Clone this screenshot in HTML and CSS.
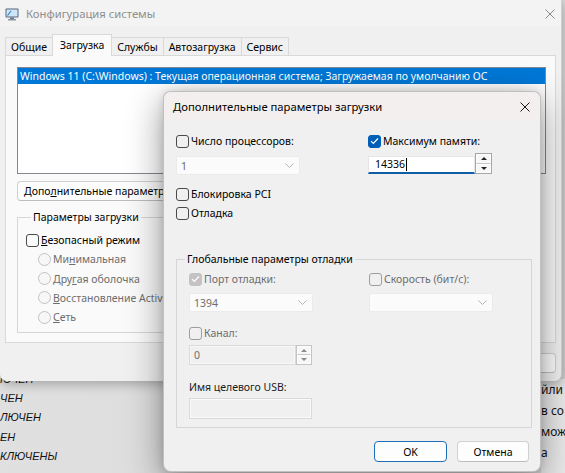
FILE: index.html
```html
<!DOCTYPE html>
<html lang="ru">
<head>
<meta charset="utf-8">
<title>Конфигурация системы</title>
<link rel="stylesheet" href="styles.css">
</head>
<body>
<div class="desk">
  <div class="bgwin bg-left">
    <div>ЮЧЕН</div><div>ЧЕН</div><div>ЛЮЧЕН</div><div>ЕН</div><div>КЛЮЧЕНЫ</div>
  </div>
  <div class="bgwin bg-right">
    <div>йли</div><div>в со</div><div>мож</div><div>а</div>
  </div>

  <div class="win main">
    <div class="titlebar">
      <svg class="appicon" width="14" height="14" viewBox="0 0 14 14">
        <rect x="0.5" y="1.5" width="13" height="9" rx="1" fill="#56657a"/>
        <rect x="1.5" y="2.5" width="11" height="7" fill="#cfe6f6"/>
        <path d="M2.5 8.5 L6 4" stroke="#2f7fd0" stroke-width="1.2"/>
        <rect x="5" y="10.5" width="4" height="1.5" fill="#6b778a"/>
        <rect x="3" y="12" width="8" height="1.5" fill="#8a95a5"/>
      </svg>
      <span class="title">Конфигурация системы</span>
      <svg class="xbtn main-x" width="10" height="10" viewBox="0 0 10 10"><path d="M0.5 0.5L9.5 9.5M9.5 0.5L0.5 9.5" stroke="#8a8a8a" stroke-width="1"/></svg>
    </div>
    <div class="tabs">
      <div class="tab">Общие</div>
      <div class="tab sel">Загрузка</div>
      <div class="tab">Службы</div>
      <div class="tab">Автозагрузка</div>
      <div class="tab">Сервис</div>
    </div>
    <div class="panel">
      <div class="listbox">
        <div class="lrow sel">Windows 11 (C:\Windows) : Текущая операционная система; Загружаемая по умолчанию ОС</div>
      </div>
      <div class="btn adv">Допо<u>л</u>нительные параметры</div>
      <fieldset class="grp bootgrp">
        <legend>Параметры загрузки</legend>
        <div class="opt"><span class="cb"></span><span><u>Б</u>езопасный режим</span></div>
        <div class="opt sub dis"><span class="rb"></span><span>Ми<u>н</u>имальная</span></div>
        <div class="opt sub dis"><span class="rb"></span><span>Дру<u>г</u>ая оболочка</span></div>
        <div class="opt sub dis"><span class="rb"></span><span><u>В</u>осстановление Active</span></div>
        <div class="opt sub dis"><span class="rb"></span><span><u>С</u>еть</span></div>
      </fieldset>
    </div>
    <div class="mainbtns">
      <div class="btn">OK</div><div class="btn">Отмена</div><div class="btn">Применить</div><div class="btn">Справка</div>
    </div>
  </div>

  <div class="win dlg">
    <div class="dlg-title">
      <span>Дополнительные параметры загрузки</span>
      <svg class="xbtn dlg-x" width="10" height="10" viewBox="0 0 10 10"><path d="M0.5 0.5L9.5 9.5M9.5 0.5L0.5 9.5" stroke="#1a1a1a" stroke-width="1"/></svg>
    </div>
    <div class="dlg-body">
      <div class="top">
        <div class="col left">
          <div class="opt"><span class="cb"></span><span>Число процессоров:</span></div>
          <div class="combo dis r2"><span>1</span><svg width="9" height="5" viewBox="0 0 9 5"><path d="M0.5 0.5L4.5 4.5L8.5 0.5" fill="none" stroke="#b4b4b4"/></svg></div>
          <div class="opt pci"><span class="cb"></span><span>Блокировка PCI</span></div>
          <div class="opt dbgopt"><span class="cb"></span><span>Отладка</span></div>
        </div>
        <div class="col right">
          <div class="opt"><span class="cb on"><svg width="9" height="8" viewBox="0 0 9 8"><path d="M1 4.2L3.3 6.5L8 1.5" fill="none" stroke="#fff" stroke-width="1.2"/></svg></span><span>Максимум памяти:</span></div>
          <div class="spin mem">
            <div class="edit focus">14336<span class="caret"></span></div>
            <div class="spinbtns"><span class="up"></span><span class="dn"></span></div>
          </div>
        </div>
      </div>

      <fieldset class="grp dbg">
        <legend>Глобальные параметры отладки</legend>
        <div class="dbg-grid">
          <div class="opt dis"><span class="cb on"><svg width="9" height="8" viewBox="0 0 9 8"><path d="M1 4.2L3.3 6.5L8 1.5" fill="none" stroke="#fff" stroke-width="1.2"/></svg></span><span>Порт отладки:</span></div>
          <div class="opt dis"><span class="cb"></span><span>Скорость (бит/с):</span></div>
          <div class="combo dis"><span>1394</span><svg width="9" height="5" viewBox="0 0 9 5"><path d="M0.5 0.5L4.5 4.5L8.5 0.5" fill="none" stroke="#b4b4b4"/></svg></div>
          <div class="combo dis"><span></span><svg width="9" height="5" viewBox="0 0 9 5"><path d="M0.5 0.5L4.5 4.5L8.5 0.5" fill="none" stroke="#b4b4b4"/></svg></div>
        </div>
        <div class="opt dis chan"><span class="cb"></span><span>Канал:</span></div>
        <div class="spin dis chanspin">
          <div class="edit">0</div>
          <div class="spinbtns"><span class="up"></span><span class="dn"></span></div>
        </div>
        <div class="lbl">Имя целевого USB:</div>
        <div class="edit dis usb"></div>
      </fieldset>

      <div class="dlg-btns">
        <div class="btn def">OK</div>
        <div class="btn">Отмена</div>
      </div>
    </div>
  </div>
</div>
</body>
</html>
```

FILE: styles.css
```css
* { box-sizing: border-box; }
html, body { margin: 0; padding: 0; }
body {
  width: 565px;
  height: 473px;
  overflow: hidden;
  font-family: "Segoe UI", "Noto Sans", sans-serif;
  font-size: 10.5px;
  color: #000;
}
.desk {
  position: relative;
  width: 565px;
  height: 473px;
  overflow: hidden;
  background: linear-gradient(90deg, #e0e0e0 0%, #d6d6d6 100%);
}

/* background windows */
.bgwin { position: absolute; }
.bg-left {
  left: 0; top: 370px; width: 170px;
  font-family: "Liberation Sans", sans-serif;
  font-style: italic;
  font-size: 11px;
  line-height: 19.2px;
  color: #111;
}
.bg-right {
  left: 541px; top: 379px; width: 40px; height: 94px;
  background: #e9e9e9;
  font-size: 12px;
  line-height: 21px;
  color: #111;
  white-space: nowrap;
}

/* windows */
.win { position: absolute; display: flex; flex-direction: column; }
.main {
  left: 0; top: 0;
  width: 562px; height: 381px;
  background: #f0f0f0;
  border-right: 1px solid #d0d0d0;
  border-radius: 0 0 7px 7px;
  box-shadow: 0 3px 12px rgba(0,0,0,0.28);
}
.titlebar {
  height: 27px;
  display: flex;
  align-items: center;
  padding-left: 5px;
  background: #f3f3f3;
}
.appicon { flex: none; }
.title { margin-left: 7px; color: #8e8e8e; font-size: 11.25px; }
.main-x { margin-left: auto; margin-right: 6px; }

.tabs {
  height: 28px;
  display: flex;
  align-items: flex-end;
  padding-left: 5px;
}
.tab {
  height: 18px;
  padding: 0 5px;
  border: 1px solid #d9d9d9;
  border-bottom: none;
  margin-right: -1px;
  background: #f0f0f0;
  display: flex;
  align-items: center;
  white-space: nowrap;
}
.tab.sel {
  height: 22px;
  margin-bottom: -1px;
  padding: 0 7px 2px;
  background: #fafafa;
  position: relative;
  z-index: 1;
}

.panel {
  margin: 0 5px;
  height: 288px;
  border: 1px solid #d9d9d9;
  background: #fafafa;
  padding: 11px 11px 0;
}
.listbox {
  width: 529px;
  height: 107px;
  border: 1px solid #828790;
  background: #fff;
}
.lrow {
  height: 16px;
  line-height: 16px;
  padding-left: 2px;
  white-space: nowrap;
}
.lrow.sel { background: #0078d7; color: #fff; }

.btn {
  height: 21px;
  border: 1px solid #d0d0d0;
  border-bottom-color: #bdbdbd;
  border-radius: 4px;
  background: #fdfdfd;
  display: flex;
  align-items: center;
  justify-content: center;
  white-space: nowrap;
}
.adv {
  margin-top: 7px;
  height: 20px;
  width: 147px;
  overflow: hidden;
  justify-content: flex-start;
  padding-left: 6px;
  border-top-right-radius: 0;
  border-bottom-right-radius: 0;
}
u { text-underline-offset: 1px; }

.grp {
  margin: 0;
  border: 1px solid #d6d6d6;
  min-width: 0;
}
.grp legend {
  padding: 0 2px;
  line-height: 16px;
  height: 16px;
}
.bootgrp {
  margin-top: 8px;
  width: 147px;
  overflow: hidden;
  padding: 7px 8px 7px;
}
.bootgrp legend { margin-left: 5px; }

.opt {
  display: flex;
  align-items: center;
  gap: 2px;
  height: 16px;
  white-space: nowrap;
}
.opt.sub { margin-left: 12px; margin-top: 3.25px; }
.dis { color: #6d6d6d; }

.cb {
  flex: none;
  width: 13px;
  height: 13px;
  border: 1px solid #4a4a4a;
  border-radius: 3px;
  display: flex;
  align-items: center;
  justify-content: center;
}
.cb.on { background: #005fb8; border-color: #005fb8; }
.dis .cb { border-color: #9d9d9d; }
.dis .cb.on { background: #c3c3c3; border-color: #c3c3c3; }
.rb {
  flex: none;
  width: 13px;
  height: 13px;
  border: 1px solid #c2c2c2;
  border-radius: 50%;
  background: #f7f7f7;
}

.mainbtns {
  display: flex;
  justify-content: flex-end;
  gap: 6px;
  padding: 10px 5px 0 0;
}
.mainbtns .btn { width: 75px; height: 20px; }

/* dialog */
.dlg {
  left: 163px; top: 91px;
  width: 378px; height: 381px;
  background: #f0f0f0;
  border: 1px solid rgba(0,0,0,0.2);
  border-radius: 8px;
  box-shadow: 0 10px 36px rgba(0,0,0,0.42), 0 0 8px rgba(0,0,0,0.12);
  overflow: hidden;
}
.dlg-title {
  height: 29px;
  flex: none;
  background: #f4efef;
  display: flex;
  align-items: center;
  padding-left: 9px;
  font-size: 11.25px;
}
.dlg-x { margin-left: auto; margin-right: 10px; }
.dlg-body {
  padding: 12px 11px 0 11px;
}
.top { display: flex; padding-left: 1px; }
.col { display: flex; flex-direction: column; }
.col.left { width: 192px; }
.combo {
  width: 124px;
  height: 19px;
  background: #fbfbfb;
  border: 1px solid #ebebeb;
  border-radius: 2px;
  display: flex;
  align-items: center;
  justify-content: space-between;
  padding: 0 5px 0 4px;
}
.r2 { margin-top: 7px; }
.pci { margin-top: 11px; }
.dbgopt { margin-top: 3px; }

.spin { display: flex; align-items: flex-end; }
.mem { margin-top: 4px; }
.edit {
  width: 107px;
  height: 18px;
  background: #fff;
  border: 1px solid #e6e6e6;
  border-bottom: 2px solid #0f5ea8;
  padding-left: 6px;
  line-height: 15px;
  display: flex;
  align-items: center;
}
.caret {
  display: inline-block;
  width: 1px;
  height: 13px;
  background: #000;
  margin-left: 1px;
}
.spinbtns {
  width: 17px;
  height: 21px;
  border: 1px solid #a6a6a6;
  display: flex;
  flex-direction: column;
  background: #f7f7f7;
}
.spinbtns span {
  flex: 1;
  display: flex;
  align-items: center;
  justify-content: center;
  border: 1px solid #fdfdfd;
}
.spinbtns .up { border-bottom-color: #c8c8c8; }
.spinbtns .up::after {
  content: "";
  border-left: 3px solid transparent;
  border-right: 3px solid transparent;
  border-bottom: 3px solid #222;
}
.spinbtns .dn::after {
  content: "";
  border-left: 3px solid transparent;
  border-right: 3px solid transparent;
  border-top: 3px solid #222;
}

.dbg {
  margin-top: 30px;
  margin-left: 1px;
  width: 356px;
  padding: 4px 12px 8px 12px;
}
.dbg legend { margin-left: -4px; }
.dbg-grid {
  display: grid;
  grid-template-columns: 180px 124px;
  row-gap: 6px;
}
.chan { margin-top: 13px; }
.chanspin { margin-top: 4px; }
.chanspin .edit {
  height: 20px;
  width: 107px;
  background: #f0f0f0;
  border: 1px solid #dadada;
  box-shadow: inset 0 0 0 1px #f8f8f8;
  padding-left: 4px;
}
.chanspin .spinbtns { width: 16px; height: 20px; border-color: #c4c4c4; }
.chanspin .spinbtns .up::after { border-bottom-color: #8a8a8a; }
.chanspin .spinbtns .dn::after { border-top-color: #8a8a8a; }
.lbl { margin-top: 14px; height: 16px; line-height: 16px; color: #1a1a1a; }
.usb {
  margin-top: 3px;
  width: 123px;
  height: 21px;
  background: #f0f0f0;
  border: 1px solid #dadada;
  box-shadow: inset 0 0 0 1px #fafafa;
}

.dlg-btns {
  display: flex;
  justify-content: flex-end;
  gap: 10px;
  margin-top: 13px;
}
.dlg-btns .btn { width: 72px; height: 21px; }
.dlg-btns .btn.def { width: 73px; border-color: #1e6fb8; }
```
